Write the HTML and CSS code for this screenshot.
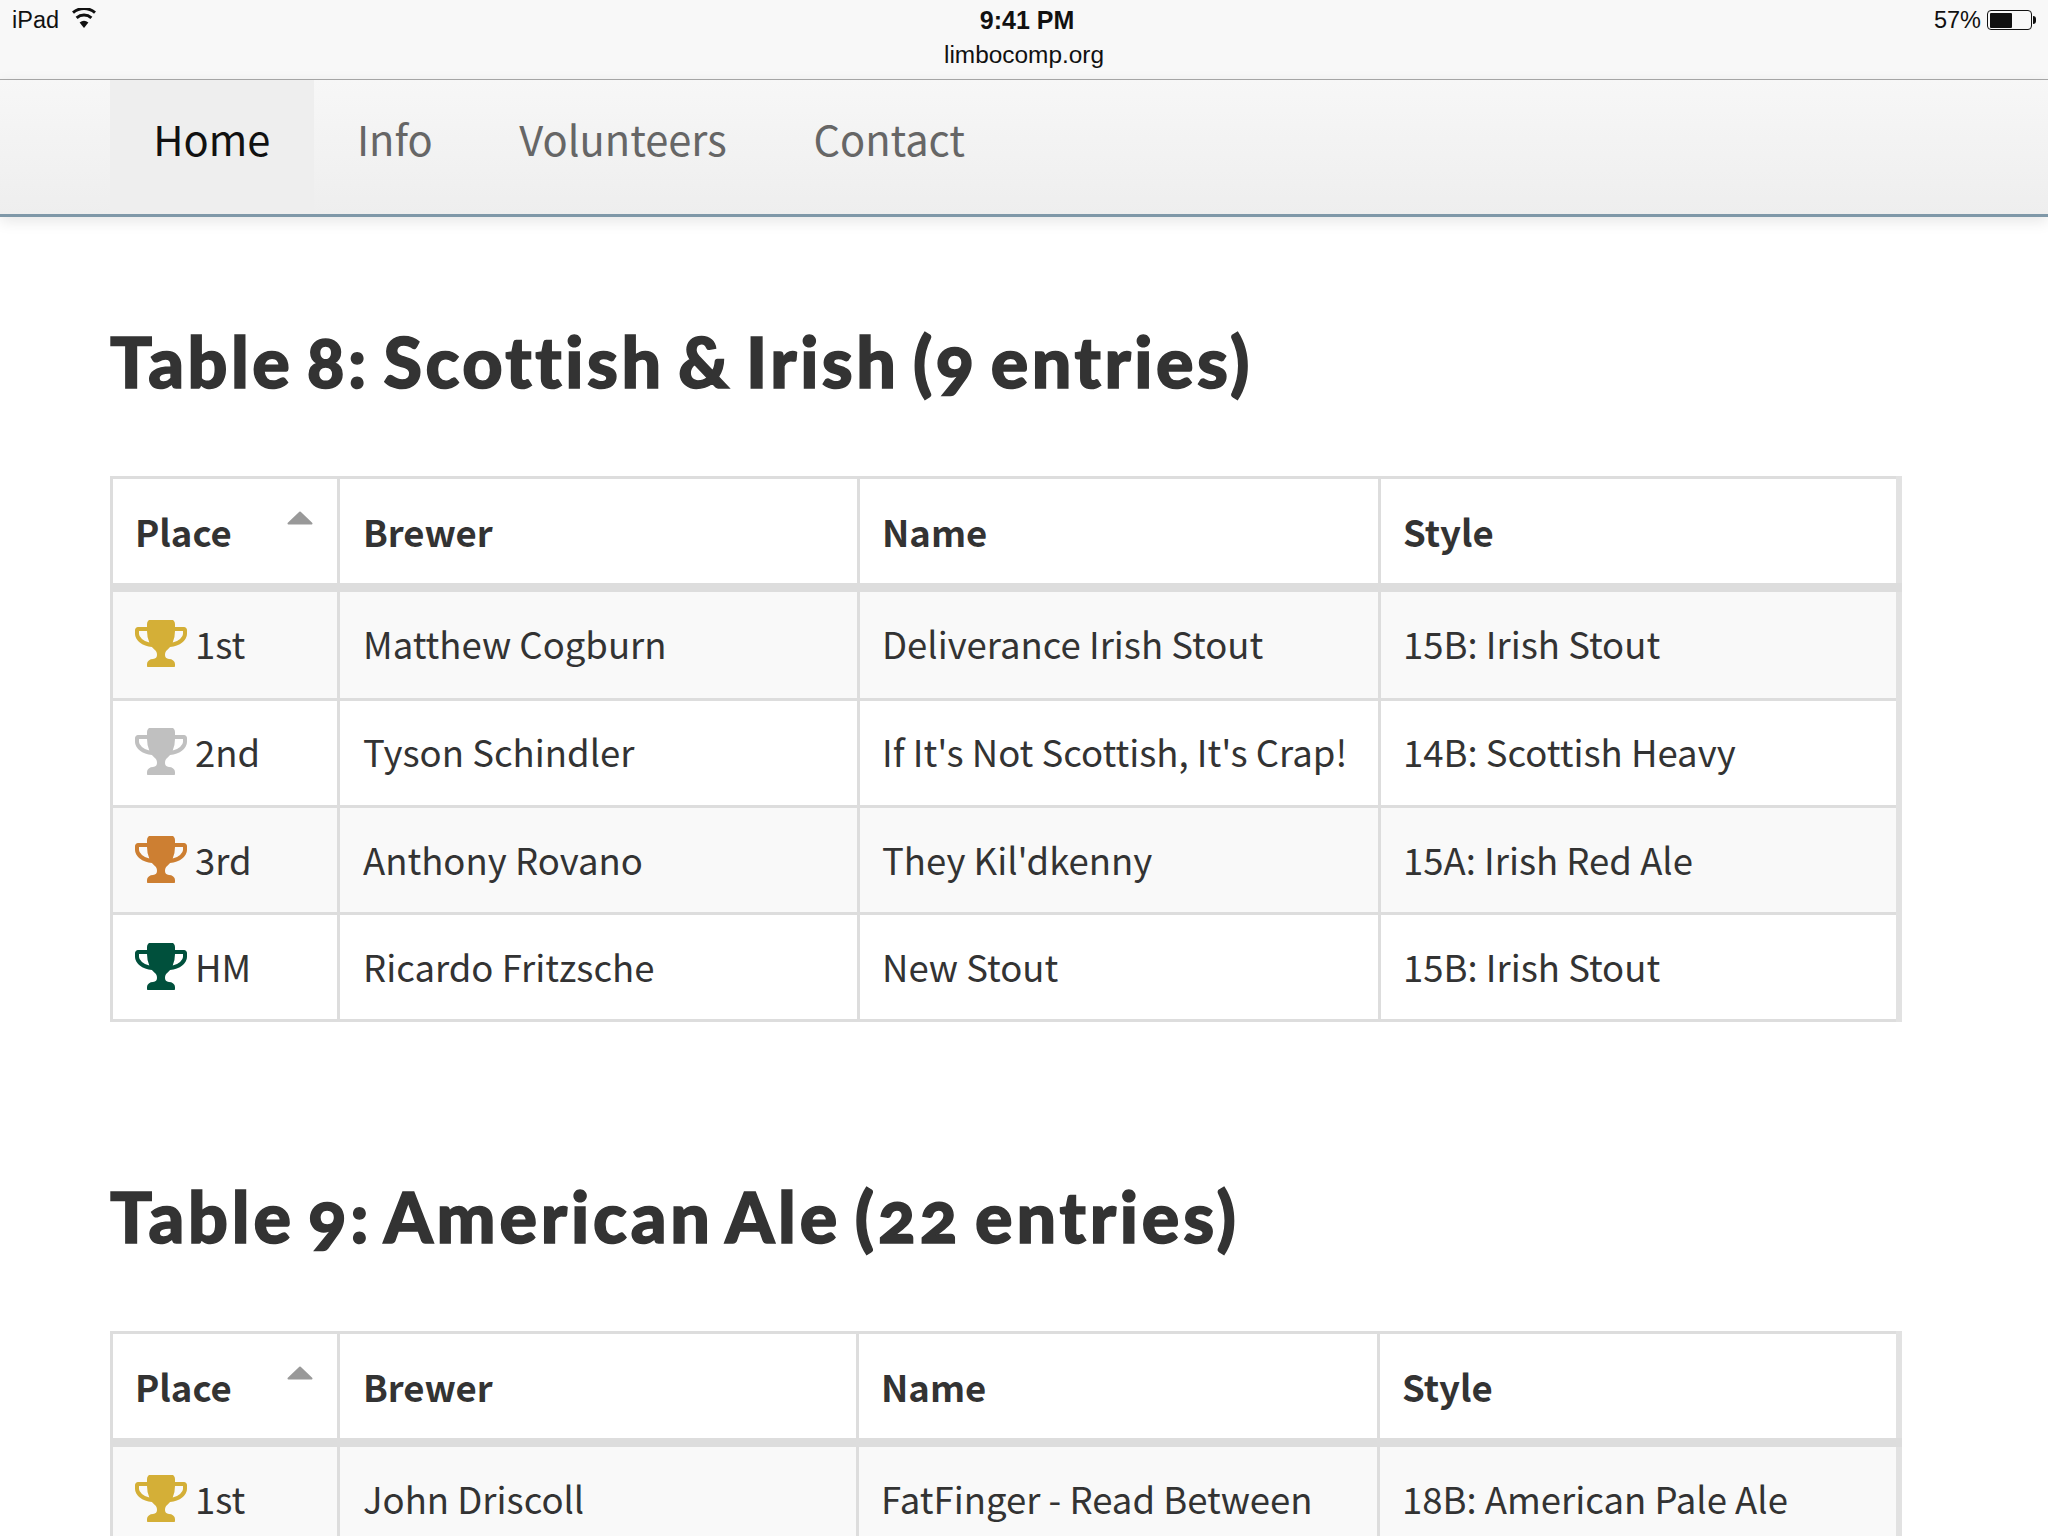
FILE: index.html
```html
<!DOCTYPE html>
<html lang="en">
<head>
<meta charset="utf-8">
<title>limbocomp.org</title>
<link rel="stylesheet" href="styles.css">
</head>
<body>
<svg class="defs" width="0" height="0" aria-hidden="true">
  <symbol id="trophy" viewBox="64 160 1664 1504">
    <path d="M522 883q-74-162-74-371h-256v96q0 78 94.5 162t235.5 113zm1078-275v-96h-256q0 209-74 371 141-29 235.5-113t94.5-162zm128-128v128q0 71-41.5 143t-112 130-173 97.5-215.5 44.5q-42 54-95 95-38 34-52.5 72.5t-14.5 89.5q0 54 30.5 91t97.5 37q75 0 133.5 45.5t58.5 114.5v64q0 14-9 23t-23 9h-832q-14 0-23-9t-9-23v-64q0-69 58.5-114.5t133.5-45.5q67 0 97.5-37t30.5-91q0-51-14.5-89.5t-52.5-72.5q-53-41-95-95-113-5-215.5-44.5t-173-97.5-112-130-41.5-143v-128q0-40 28-68t68-28h288v-96q0-66 47-113t113-47h576q66 0 113 47t47 113v96h288q40 0 68 28t28 68z"/>
  </symbol>
  <symbol id="caret" viewBox="0 0 26 14">
    <path d="M13 1.5 24.5 12.5H1.5z"/>
  </symbol>
</svg>
<header class="browser">
  <div class="status">
    <div class="status-left">
      <span>iPad</span>
      <svg class="wifi" viewBox="0 0 24 20"><path d="M12 20 7.6 14.6a7 7 0 0 1 8.8 0z"/><path class="arc" d="M4.6 9.8a11.4 11.4 0 0 1 14.8 0"/><path class="arc" d="M1 4.6a17 17 0 0 1 22 0"/></svg>
    </div>
    <div class="status-time">9:41 PM</div>
    <div class="status-right">
      <span>57%</span>
      <span class="battery"><span class="battery-fill"></span></span>
      <span class="battery-cap"></span>
    </div>
  </div>
  <div class="address">limbocomp.org</div>
</header>
<nav class="nav">
  <a class="nav-item active">Home</a>
  <a class="nav-item">Info</a>
  <a class="nav-item">Volunteers</a>
  <a class="nav-item">Contact</a>
</nav>
<main class="content">
  <h2 class="title">Table 8: Scottish &amp; Irish (9 entries)</h2>
  <table class="results">
    <colgroup><col class="c1"><col class="c2"><col class="c3"><col class="c4"></colgroup>
    <thead><tr><th><svg class="sort"><use href="#caret"/></svg>Place</th><th>Brewer</th><th>Name</th><th>Style</th></tr></thead>
    <tbody>
      <tr><td><svg class="cup gold"><use href="#trophy"/></svg>1st</td><td>Matthew Cogburn</td><td>Deliverance Irish Stout</td><td>15B: Irish Stout</td></tr>
      <tr><td><svg class="cup silver"><use href="#trophy"/></svg>2nd</td><td>Tyson Schindler</td><td>If It's Not Scottish, It's Crap!</td><td>14B: Scottish Heavy</td></tr>
      <tr><td><svg class="cup bronze"><use href="#trophy"/></svg>3rd</td><td>Anthony Rovano</td><td>They Kil'dkenny</td><td>15A: Irish Red Ale</td></tr>
      <tr><td><svg class="cup hm"><use href="#trophy"/></svg>HM</td><td>Ricardo Fritzsche</td><td>New Stout</td><td>15B: Irish Stout</td></tr>
    </tbody>
  </table>
  <h2 class="title second">Table 9: American Ale (22 entries)</h2>
  <table class="results alt">
    <colgroup><col class="c1"><col class="c2"><col class="c3"><col class="c4"></colgroup>
    <thead><tr><th><svg class="sort"><use href="#caret"/></svg>Place</th><th>Brewer</th><th>Name</th><th>Style</th></tr></thead>
    <tbody>
      <tr><td><svg class="cup gold"><use href="#trophy"/></svg>1st</td><td>John Driscoll</td><td>FatFinger - Read Between</td><td>18B: American Pale Ale</td></tr>
    </tbody>
  </table>
</main>
</body>
</html>
```
FILE: styles.css
```css
* { box-sizing: border-box; }
html, body { margin: 0; padding: 0; height: 1536px; overflow: hidden; background: #fff; }
body { font-family: "Noto Sans CJK SC", "Open Sans", sans-serif; color: #333; }
.defs { position: absolute; }

.browser { height: 80px; background: #f8f8f8; border-bottom: 1px solid #aaa; font-family: "Liberation Sans", Arial, sans-serif; color: #111; padding: 8px 12px 0; }
.status { display: grid; grid-template-columns: 1fr auto 1fr; align-items: center; height: 24px; font-size: 23.5px; line-height: 24px; }
.status-left { display: flex; align-items: center; gap: 13px; }
.wifi { width: 24px; height: 20px; margin-top: -4px; }
.wifi path { fill: #111; }
.wifi .arc { fill: none; stroke: #111; stroke-width: 3; }
.status-time { font-weight: 700; font-size: 25px; padding-left: 6px; }
.status-right { display: flex; align-items: center; justify-content: flex-end; }
.battery { width: 45px; height: 20px; margin-left: 6px; border: 1.5px solid #111; border-radius: 4px; padding: 1.5px; display: block; }
.battery-fill { display: block; width: 57%; height: 100%; background: #111; border-radius: 1px; }
.battery-cap { width: 3px; height: 8px; margin-left: 1px; background: #111; border-radius: 0 3px 3px 0; }
.address { text-align: center; font-size: 24.4px; line-height: 26px; margin-top: 10px; }

.nav { height: 137px; display: flex; padding: 0 110px; background: linear-gradient(#f7f7f7, #eee); border-bottom: 3px solid #7f98a8; box-shadow: 0 4px 14px rgba(0, 0, 0, .1); font-size: 41.6px; line-height: 116px; position: relative; }
.nav-item { padding: 0 43.3px; color: #666; }
.nav-item.active { color: #111; background: #eee; }

.content { padding: 0 0 0 110px; }
.title { margin: 0; height: 259px; padding-top: 111px; font-family: "Lato", sans-serif; font-weight: 900; font-size: 70px; letter-spacing: 3.5px; word-spacing: -6.6px; line-height: 66px; color: #333; font-feature-settings: "onum"; -webkit-text-stroke: 1.5px #333; }
.title.second { height: 309px; padding-top: 161px; letter-spacing: 3.8px; }

.results { border-collapse: collapse; table-layout: fixed; width: 1787px; font-size: 36.5px; line-height: 50px; }
.c1 { width: 227px; }
.c2 { width: 520px; }
.c3 { width: 521px; }
.c4 { width: 519px; }
.alt .c2 { width: 519px; }
.alt .c3 { width: 521px; }
.alt .c4 { width: 520px; }
.results th, .results td { border: 3px solid #ddd; padding: 0 23px 0 22px; text-align: left; white-space: nowrap; height: 107px; }
.results th:nth-child(2), .results td:nth-child(2) { padding-left: 23px; }
.results th:last-child, .results td:last-child { border-right: 6px solid #e2e2e2; }
.results tbody tr:first-child td { height: 112px; padding-bottom: 2px; }
.results tbody tr:nth-child(2) td { padding-bottom: 2px; }
.results th { height: 110px; padding-top: 2px; font-weight: 700; border-bottom-width: 9px; background: #fff; position: relative; }
.results tbody tr:nth-child(odd) td { background: #f9f9f9; }
.sort { position: absolute; right: 24px; top: 32px; width: 26px; height: 14px; fill: #999; stroke: #999; stroke-width: 2; stroke-linejoin: round; }
.cup { width: 52px; height: 47px; vertical-align: -8px; margin-right: 8px; }
.gold { fill: #d4af37; }
.silver { fill: #c0c0c0; }
.bronze { fill: #cd7f32; }
.hm { fill: #00503c; }
```
